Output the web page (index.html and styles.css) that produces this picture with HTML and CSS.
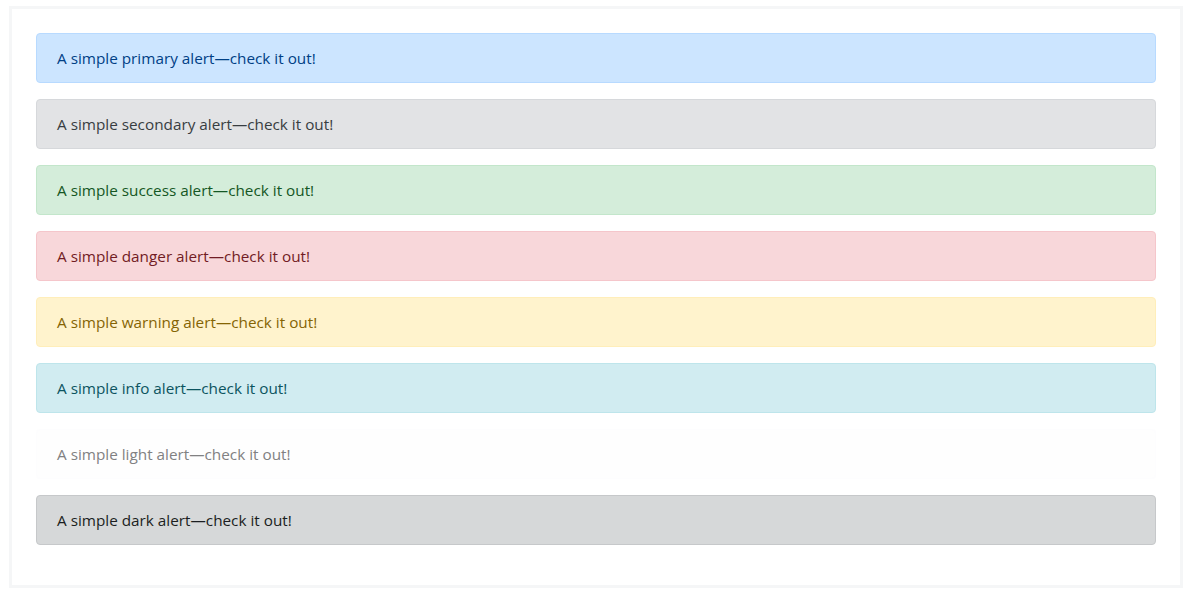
FILE: index.html
```html
<!DOCTYPE html>
<html lang="en">
<head>
<meta charset="utf-8">
<title>Alerts</title>
<link rel="stylesheet" href="styles.css">
</head>
<body>
<div class="frame">
  <div class="alert alert-primary">A simple primary alert—check it out!</div>
  <div class="alert alert-secondary">A simple secondary alert—check it out!</div>
  <div class="alert alert-success">A simple success alert—check it out!</div>
  <div class="alert alert-danger">A simple danger alert—check it out!</div>
  <div class="alert alert-warning">A simple warning alert—check it out!</div>
  <div class="alert alert-info">A simple info alert—check it out!</div>
  <div class="alert alert-light">A simple light alert—check it out!</div>
  <div class="alert alert-dark">A simple dark alert—check it out!</div>
</div>
</body>
</html>
```
FILE: styles.css
```css
html, body {
  background: #ffffff;
}
body {
  margin: 6px 3px 0 9px;
  font-family: "Open Sans", "Noto Sans", sans-serif;
  font-size: 15.3px;
  line-height: 24px;
}
.frame {
  border: 3px solid #f5f6f7;
  padding: 24px 24px 8px;
  box-sizing: border-box;
  height: 582px;
}
.alert {
  padding: 12px 20px;
  margin-bottom: 16px;
  border: 1px solid transparent;
  border-radius: 4px;
}
.alert-primary { color: #004085; background: #cce5ff; border-color: #b8daff; }
.alert-secondary { color: #383d41; background: #e2e3e5; border-color: #d6d8db; }
.alert-success { color: #155724; background: #d4edda; border-color: #c3e6cb; }
.alert-danger { color: #721c24; background: #f8d7da; border-color: #f5c6cb; }
.alert-warning { color: #856404; background: #fff3cd; border-color: #ffeeba; }
.alert-info { color: #0c5460; background: #d1ecf1; border-color: #bee5eb; }
.alert-light { color: #818182; background: #fefefe; border-color: #fdfdfe; }
.alert-dark { color: #1b1e21; background: #d6d8d9; border-color: #c6c8ca; }
```
